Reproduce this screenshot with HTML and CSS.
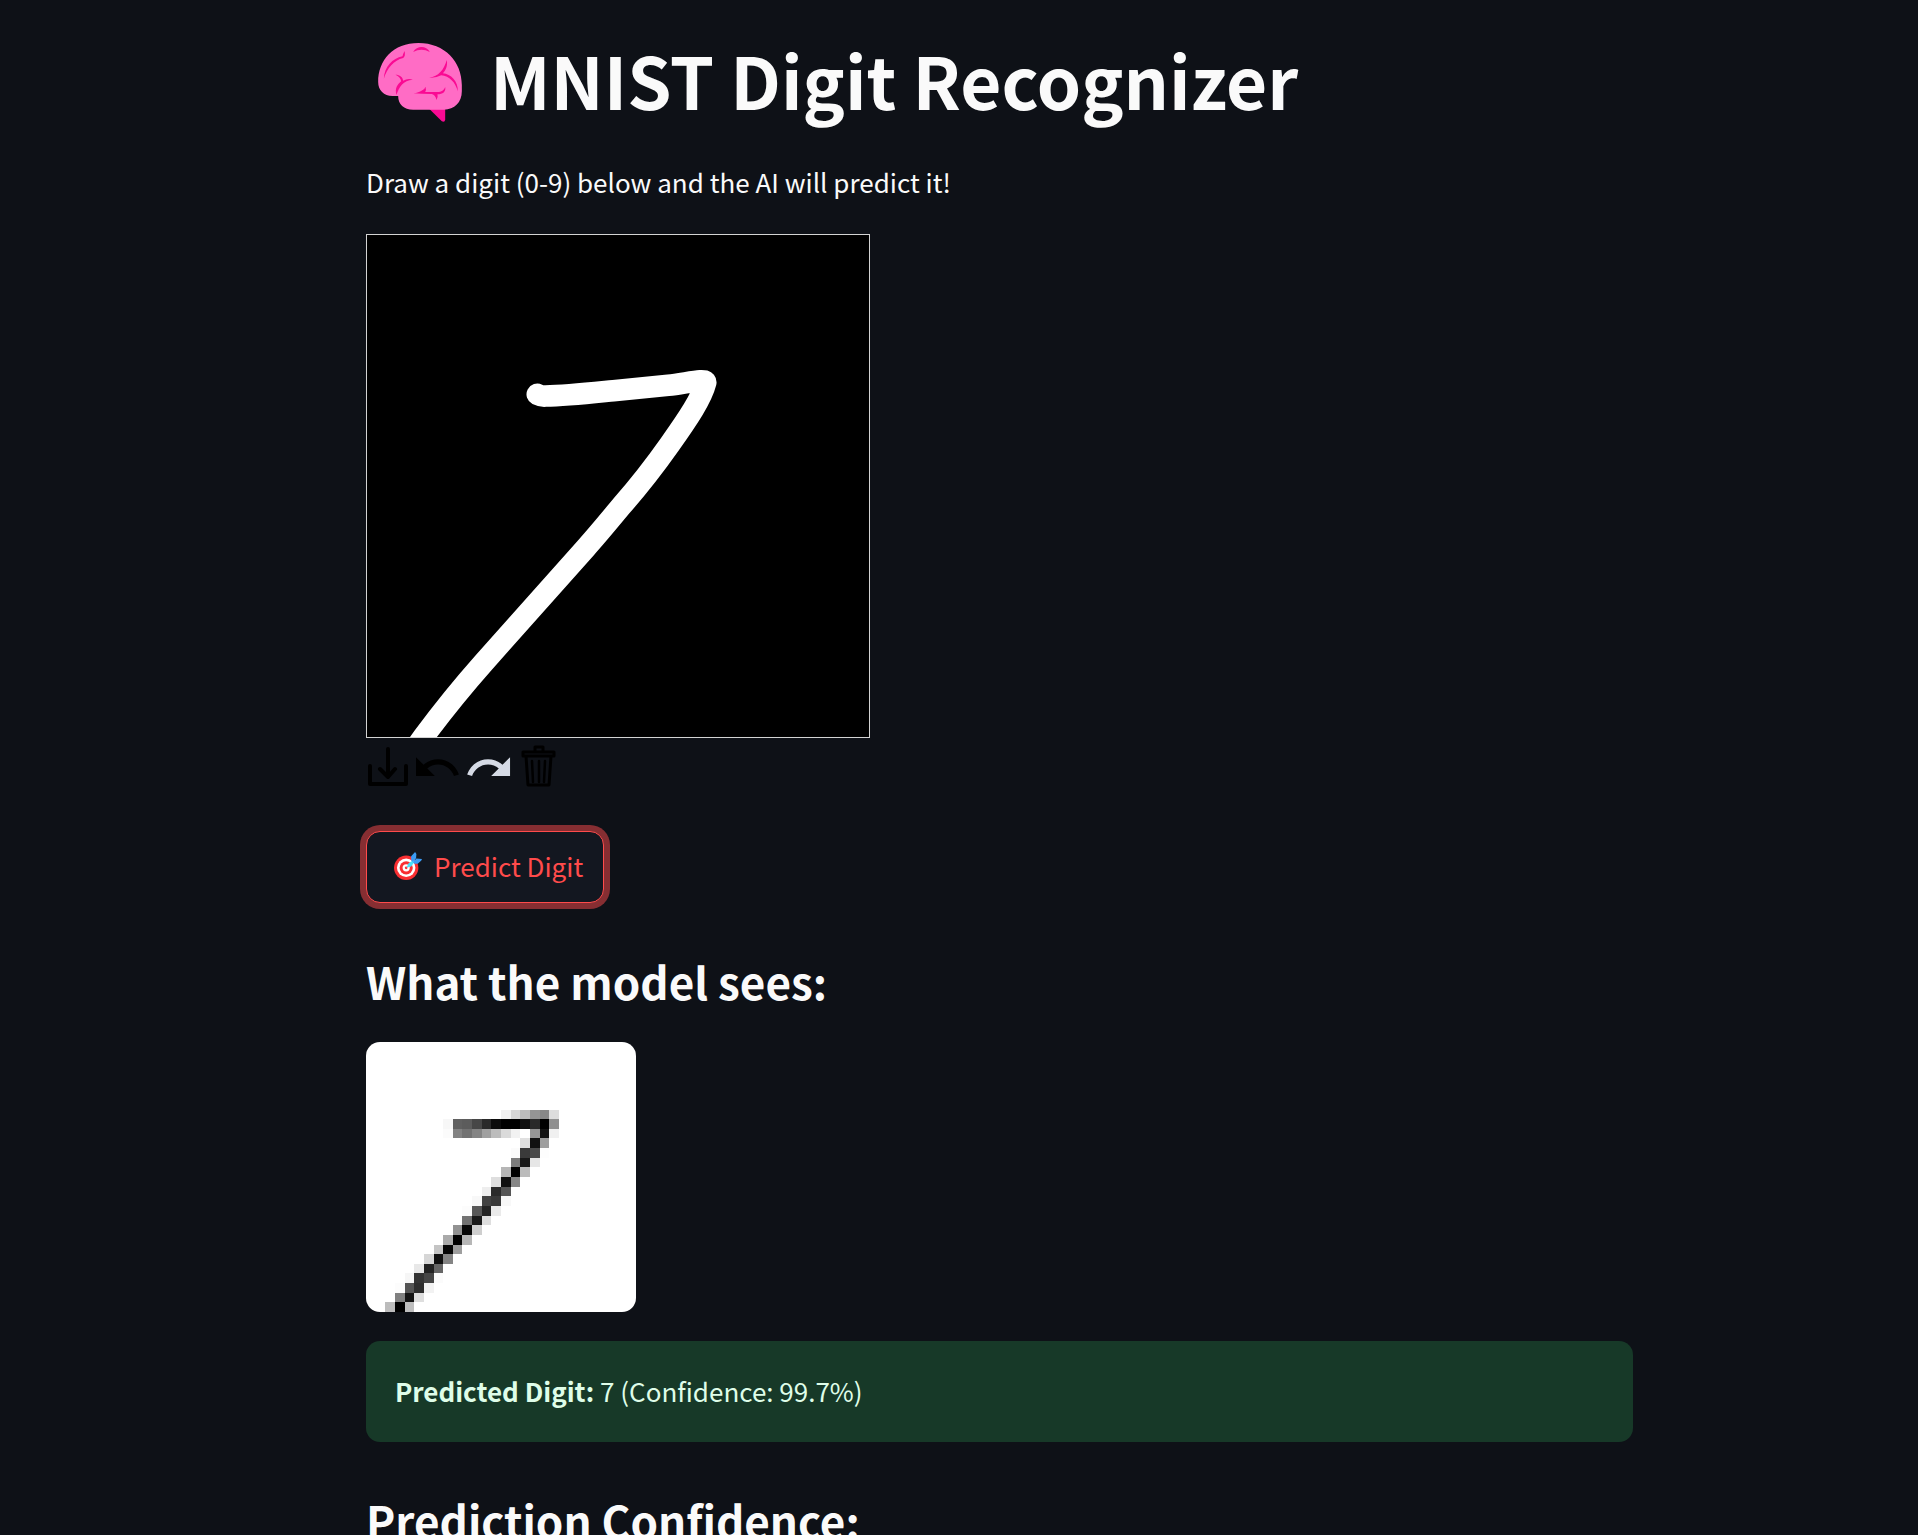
FILE: index.html
```html
<!DOCTYPE html>
<html lang="en">
<head>
<meta charset="utf-8">
<title>MNIST Digit Recognizer</title>
<link rel="stylesheet" href="styles.css">
</head>
<body>
<main class="app">
  <h1 class="title">
    <svg class="brain" viewBox="85 69 251 237" aria-hidden="true">
      <path fill="#fa0a93" d="M238 266H286V299Q285 308 276 304Z"/>
      <path fill="#ff6cc5" d="M145 228H128C102 228 85 211 85 186C85 120 130 69 206 69C285 69 336 125 336 195V214C336 247 314 269 282 269H190C162 269 145 253 145 228Z"/>
      <g fill="#fa0a93">
        <path d="M102 176C104 140 128 115 158 109Q160 101 164 93Q168 108 160 114C132 121 112 144 102 176Z"/>
        <path d="M190 96C201 77 229 76 240 96Q215 83 190 96Z"/>
        <path d="M238 173C266 169 282 150 291 120C294 138 287 152 279 160C303 162 325 183 324 214C316 186 299 169 274 166Q258 175 238 173Z"/>
        <path d="M137 164C150 164 159 171 160 182Q174 174 189 179C160 182 148 199 140 225C134 205 143 193 154 184Q152 170 137 164Z"/>
        <path d="M190 220Q208 217 215 212Q224 210 227 200Q230 209 226 216H262C276 216 282 211 286 201C289 215 279 223 263 223Q265 232 260 240Q257 225 246 222Q216 222 190 220Z"/>
      </g>
    </svg>
    <span>MNIST Digit Recognizer</span>
  </h1>
  <p class="intro">Draw a digit (0-9) below and the AI will predict it!</p>

  <section class="drawing" aria-label="Drawing canvas">
    <svg class="pad" viewBox="21 30 1506 1506" role="img" aria-label="Hand-drawn seven">
      <path d="M532 508Q544 514 556 513C620 512 700 503 760 497L925 481C975 476 1040 458 1037 473C1025 520 985 580 928 660C880 728 835 785 785 842C750 884 715 927 678 968L370 1314C300 1393 245 1462 190 1536L170 1564"/>
    </svg>
    <div class="tools">
      <button class="tool" type="button" aria-label="Send">
        <svg viewBox="0 0 43 43" class="line"><path stroke-width="4" d="M4 22V40H40V22"/><path stroke-width="4" d="M22 5V32M14 25L22 33L29 25"/></svg>
      </button>
      <button class="tool" type="button" aria-label="Undo">
        <svg viewBox="2 .7 20.5 20.5"><path d="M12.500 8c-2.650 0-5.050.99-6.900 2.600L2 7v9h9l-3.620-3.620c1.390-1.160 3.160-1.880 5.120-1.880 3.540 0 6.550 2.310 7.600 5.500l2.370-.78C21.080 11.030 17.150 8 12.500 8z"/></svg>
      </button>
      <button class="tool tool-active" type="button" aria-label="Redo">
        <svg viewBox="1 .7 20.5 20.5"><path d="M18.400 10.600C16.550 8.990 14.150 8 11.500 8c-4.650 0-8.580 3.030-9.960 7.220L3.900 16c1.050-3.190 4.050-5.500 7.600-5.500 1.950 0 3.730.72 5.120 1.880L13 16h9V7l-3.600 3.600z"/></svg>
      </button>
      <button class="tool" type="button" aria-label="Reset">
        <svg viewBox="0 0 43 43" class="line"><path stroke-width="3" d="M7 8H38V12H7ZM19 8V3H27V8M10 12L12 41H33L35 12"/><path stroke-width="2.500" d="M16 17L17 38M23 17V38M29 17L28 38"/></svg>
      </button>
    </div>
  </section>

  <button class="predict" type="button">
    <svg class="target" viewBox="0 0 85 85" aria-hidden="true">
      <circle cx="37" cy="48" r="37" fill="#f92f32"/>
      <circle cx="37" cy="48" r="28" fill="#fff"/>
      <circle cx="37" cy="48" r="20" fill="#f92f32"/>
      <circle cx="37" cy="48" r="11" fill="#fff"/>
      <circle cx="37" cy="48" r="4" fill="#f92f32"/>
      <path fill="#4ae0fb" d="M38 48L44 35L60 23L64 28L52 44Z"/>
      <path fill="#3b9cf5" d="M52 25V13L64 0L68 6L67 19L57 30ZM58 31L68 20L85 21L83 26L72 36H62Z"/>
    </svg>
    <span>Predict Digit</span>
  </button>

  <h2 class="heading">What the model sees:</h2>
  <canvas class="preview" id="preview" width="28" height="28" role="img" aria-label="Model input, 28 by 28 pixels"></canvas>

  <div class="alert" role="status"><strong>Predicted Digit:</strong> 7 (Confidence: 99.7%)</div>

  <h2 class="heading">Prediction Confidence:</h2>
</main>
<script src="preview.js"></script>
</body>
</html>
```

FILE: preview.js
```js
// Each row: [row, first column, grey levels as two-digit hex].
const rows = [
  [7, 14, "f0 d6 bb 95 88 dd"],
  [8, 8, "f7 60 5c 47 2a 0c 00 00 10 2a 00 90"],
  [9, 8, "fb 82 72 84 a0 bc da f2 ff 96 14 f0"],
  [10, 16, "e0 10 9e"],
  [11, 15, "fb 3a 4a fd"],
  [12, 15, "7c 18 e6"],
  [13, 14, "b6 00 bb"],
  [14, 13, "de 10 86"],
  [15, 12, "ee 2a 55"],
  [16, 11, "f8 42 38 f8"],
  [17, 10, "fc 58 24 ea"],
  [18, 10, "72 1a de"],
  [19, 9, "92 08 ce"],
  [20, 8, "aa 02 b6"],
  [21, 7, "c4 06 9e"],
  [22, 6, "d6 10 84"],
  [23, 5, "e8 22 66"],
  [24, 4, "f6 34 46 fb"],
  [25, 3, "fc 54 2e f2"],
  [26, 3, "80 14 de"],
  [27, 2, "bc 00 be"]
];
const ctx = document.getElementById("preview").getContext("2d");
ctx.fillStyle = "#fff";
ctx.fillRect(0, 0, 28, 28);
for (const [y, x, levels] of rows) {
  levels.split(" ").forEach((v, i) => {
    ctx.fillStyle = "#" + v + v + v;
    ctx.fillRect(x + i, y, 1, 1);
  });
}
```

FILE: styles.css
```css
* { box-sizing: border-box; }

body {
  margin: 0;
  height: 100vh;
  overflow: hidden;
  background: #0e1117;
  color: #fafafa;
  font: 400 26px/46px "Noto Sans CJK SC", "Source Sans Pro", sans-serif;
}

.app {
  display: flex;
  flex-direction: column;
  align-items: flex-start;
  padding: 31px 285px 0 366px;
}

.title {
  display: flex;
  align-items: center;
  gap: 28px;
  margin: 0;
  padding-left: 12px;
  font-size: 71px;
  font-weight: 700;
  line-height: 96px;
}

.brain { width: 84px; height: 79px; flex: none; margin-top: 6px; }

.intro { margin: 32px 0 29px; }

.pad {
  display: block;
  width: 504px;
  height: 504px;
  border: 1px solid #d3d3d3;
  background: #000;
}

.pad path {
  fill: none;
  stroke: #fff;
  stroke-width: 65;
  stroke-linecap: round;
  stroke-linejoin: round;
}

.tools { display: flex; gap: 7px; padding-top: 6px; }

.tool {
  width: 43px;
  height: 43px;
  padding: 0;
  border: 0;
  background: none;
  color: #000;
}

.tool-active { color: #d5dae5; }

.tool svg {
  display: block;
  width: 43px;
  height: 43px;
  fill: currentColor;
  overflow: visible;
}

.tool .line {
  fill: none;
  stroke: currentColor;
  stroke-linecap: round;
  stroke-linejoin: round;
}

.predict {
  display: flex;
  align-items: center;
  gap: 12px;
  margin-top: 44px;
  height: 72px;
  padding: 0 20px 2px 27px;
  border: 1px solid #ff4b4b;
  border-radius: 14px;
  background: #131720;
  box-shadow: 0 0 0 6px #862e32;
  color: #ff4b4b;
  font: inherit;
}

.target { width: 28px; height: 28px; flex: none; }

.heading {
  margin: 50px 0 33px;
  font-size: 44px;
  font-weight: 600;
  line-height: 56px;
}

.preview {
  display: block;
  width: 270px;
  height: 270px;
  border-radius: 14px;
  image-rendering: pixelated;
}

.alert {
  align-self: stretch;
  margin-top: 29px;
  padding: 27px 29px 29px;
  border-radius: 14px;
  background: #173928;
  color: #dffde9;
  line-height: 45px;
}
```
